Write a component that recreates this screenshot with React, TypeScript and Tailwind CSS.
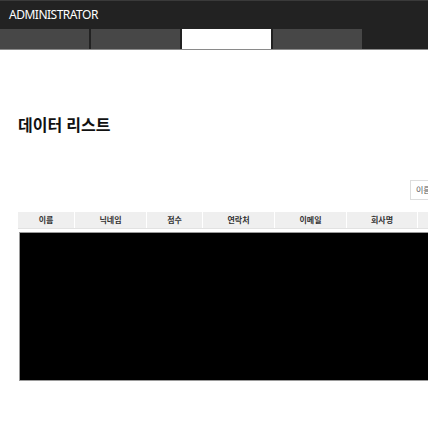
export default function App() {
  const tabs = [false, false, true, false];
  const cols = [
    { label: '이름', w: 'w-[57px]' },
    { label: '닉네임', w: 'w-[72px]' },
    { label: '점수', w: 'w-[56px]' },
    { label: '연락처', w: 'w-[72px]' },
    { label: '이메일', w: 'w-[72px]' },
    { label: '회사명', w: 'w-[71px]' },
    { label: '', w: 'w-[72px]' },
  ];

  return (
    <div
      className="w-[428px] h-[427px] overflow-hidden bg-white"
      style={{ fontFamily: '"Noto Sans", "Noto Sans CJK KR", sans-serif' }}
    >
      <header className="bg-[#222222] border-t border-[#3a3a3a] border-b border-b-[#8a8a8a]">
        <div className="h-[28px] flex items-center pl-[9px] text-[12px] tracking-[-0.5px] text-white">ADMINISTRATOR</div>
        <nav className="flex gap-[2px] h-[20px]">
          {tabs.map((active, i) => (
            <div key={i} className={`w-[89px] ${active ? 'bg-white' : 'bg-[#474747]'}`} />
          ))}
        </nav>
      </header>

      <main className="pl-[18px]">
        <h1 className="mt-[64px] text-[16px] font-bold text-[#111] leading-[22px]">데이터 리스트</h1>

        <div className="mt-[44px] flex justify-end -mr-[40px]">
          <div className="w-[58px] h-[20px] border border-[#dddddd] bg-white text-[8px] text-[#555] flex items-center pl-[5px]">
            이름
          </div>
        </div>

        <div className="mt-[12px] w-[600px]">
          <div className="flex h-[17px] bg-[#efefef] border-b border-[#e2e2e2]">
            {cols.map((c, i) => (
              <div
                key={i}
                className={`${c.w} flex items-center justify-center text-[8px] font-bold text-[#333] border-r border-white`}
              >
                {c.label}
              </div>
            ))}
          </div>
          <div className="mt-[3px] ml-[1px] h-[149px] bg-black border border-[#9a9a9a]" />
        </div>
      </main>
    </div>
  );
}
